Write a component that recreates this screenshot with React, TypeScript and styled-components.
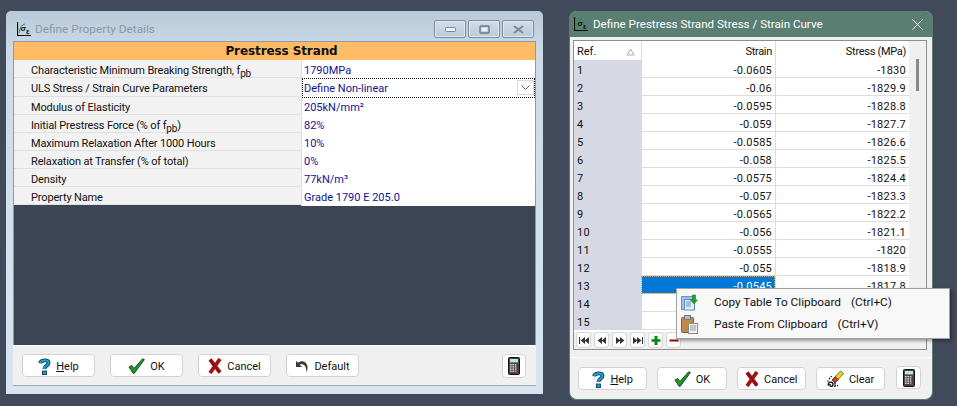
import React from 'react';
import styled, { createGlobalStyle } from 'styled-components';

const Global = createGlobalStyle`
  html, body { margin: 0; padding: 0; background: #3f4858; }
  body { width: 957px; height: 406px; overflow: hidden; font-family: Roboto, "Liberation Sans", sans-serif; font-size: 11px; color: #111; }
  * { box-sizing: border-box; }
`;

const Desktop = styled.div`
  position: relative;
  width: 957px;
  height: 406px;
  background: #414a5a;
`;

const LeftWindow = styled.section`
  position: absolute;
  left: 6px;
  top: 11px;
  width: 537px;
  height: 383px;
  border-radius: 5px 5px 0 0;
  background: linear-gradient(180deg, #b9c9d9 0, #cddbe8 40px, #d8e5f1 100%);
  padding: 0 7px 8px;
  display: flex;
  flex-direction: column;
`;

const LeftTitle = styled.header`
  height: 30px;
  flex: none;
  display: flex;
  align-items: center;
  gap: 4px;
  padding: 6px 2px 0 4px;
  color: #8a99a8;
  font-size: 11.8px;
`;

const TitleText = styled.span`
  flex: 1;
`;

const CtlGroup = styled.div`
  display: flex;
  gap: 2px;
`;

const Ctl = styled.div`
  width: 32px;
  height: 18px;
  border: 1px solid #7e8c9c;
  border-radius: 2px;
  background: linear-gradient(180deg, #d0dce8, #bccbda);
  display: flex;
  align-items: center;
  justify-content: center;
  box-shadow: inset 0 0 0 1px #dfe8f0;
`;

const LeftBody = styled.div`
  flex: 1;
  min-height: 0;
  display: flex;
  flex-direction: column;
  border: 1px solid #8c99a6;
  border-bottom: 0;
  background: #3c4554;
`;

const Banner = styled.div`
  height: 18px;
  flex: none;
  background: #ffbb66;
  padding-left: 14px;
  text-align: center;
  font-family: "DejaVu Sans", sans-serif;
  font-weight: 700;
  font-size: 12px;
  letter-spacing: -0.1px;
  line-height: 18px;
  color: #111;
`;

const PropRow = styled.div<{ $h?: number }>`
  display: grid;
  grid-template-columns: 288px 1fr;
  grid-template-rows: 1fr;
  height: ${p => p.$h ?? 18}px;
  flex: none;
  background: #f2f2f2;
  border-bottom: 1px solid #e0e0e0;
`;

const PropLabel = styled.div`
  padding: 2px 0 0 17px;
  line-height: 17px;
  letter-spacing: -0.15px;
  white-space: nowrap;
  border-right: 1px solid #e0e0e0;
  color: #111;
`;

const PropValue = styled.div`
  background: #fff;
  color: #12128f;
  padding: 2px 0 0 2px;
  line-height: 17px;
  white-space: nowrap;
`;

const Combo = styled(PropValue)`
  position: relative;
  padding: 1px 0 0 1px;
  margin-bottom: -1px;
  border: 1px dotted #111;
`;

const ComboArrow = styled.span`
  position: absolute;
  right: 0;
  top: 1px;
  width: 17px;
  height: 15px;
  background: #fff;
  border: 1px solid #d8d8d8;
  display: flex;
  align-items: center;
  justify-content: center;
`;

const Sub = styled.span`
  font-size: 10px;
  position: relative;
  top: 3px;
`;

const Spacer = styled.div`
  flex: 1;
`;

const LeftFooter = styled.footer`
  height: 41px;
  flex: none;
  background: #f0f0f0;
  border-top: 1px solid #fff;
  border-bottom: 1px solid #a9a9a9;
  margin: 0 -1px;
  padding: 8px 10px 0 9px;
  display: flex;
  gap: 15px;
`;

const Btn = styled.button<{ $w?: number }>`
  width: ${p => p.$w ?? 73}px;
  height: 23px;
  padding: 1px 0 0;
  border: 1px solid #d3d3d3;
  border-radius: 4px;
  background: #fff;
  font: inherit;
  color: #111;
  display: flex;
  align-items: center;
  justify-content: center;
  gap: 5px;
`;

const CalcBtn = styled(Btn)`
  width: 24px;
  height: 24px;
  padding: 0;
  margin-left: auto;
  border-radius: 4px;
`;

const U = styled.span`
  text-decoration: underline;
`;

const RightWindow = styled.section`
  position: absolute;
  left: 569px;
  top: 11px;
  width: 364px;
  height: 389px;
  border-radius: 8px;
  background: #f0f0f0;
  border: 1px solid #5a7f72;
  border-top: 0;
  display: flex;
  flex-direction: column;
`;

const RightTitle = styled.header`
  height: 26px;
  flex: none;
  margin: 0 -1px;
  padding: 0 10px 0 5px;
  background: #5a7f72;
  border-radius: 8px 8px 0 0;
  display: flex;
  align-items: center;
  gap: 5px;
  color: #fff;
  font-size: 11.6px;
`;

const GridFrame = styled.div`
  margin: 3px 5px 0 3px;
  height: 310px;
  border: 1px solid #8f8f8f;
  background: #f0f0f0;
  flex: none;
  display: flex;
  flex-direction: column;
`;

const GridArea = styled.div`
  display: grid;
  grid-template-columns: 335px 1fr;
  height: 291px;
  flex: none;
`;

const Table = styled.div`
  display: flex;
  flex-direction: column;
  background: #fff;
  overflow: hidden;
`;

const TableRow = styled.div`
  display: grid;
  grid-template-columns: 67px 134px 134px;
  grid-template-rows: 18px;
  height: 18px;
  line-height: 21px;
  flex: none;
`;

const HeadRow = styled(TableRow)`
  grid-template-rows: 19px;
  height: 19px;
`;

const RefHead = styled.div`
  padding-left: 3px;
  position: relative;
`;

const SortMark = styled.svg`
  position: absolute;
  right: 6px;
  top: 7px;
`;

const RefCell = styled.div`
  background: #d6d9e3;
  padding-left: 3px;
  letter-spacing: 0.2px;
`;

const Num = styled.div`
  text-align: right;
  padding-right: 3px;
  border-left: 1px solid #dcdcdc;
  letter-spacing: -0.3px;
`;

const DataNum = styled(Num)<{ $sel?: boolean }>`
  border-bottom: 1px solid #dcdcdc;
  letter-spacing: 0.25px;
  ${p => p.$sel && `
    background: #0078d7;
    color: #fff;
    outline: 1px dotted #e8a050;
    outline-offset: -1px;
  `}
`;

const ScrollTrack = styled.div`
  background: #f0f0f0;
  position: relative;
`;

const ScrollThumb = styled.div`
  position: absolute;
  left: 7px;
  top: 18px;
  width: 3px;
  height: 32px;
  background: #8a8a8a;
`;

const NavBar = styled.div`
  display: flex;
  gap: 3px;
  padding: 0 0 0 2px;
  height: 17px;
`;

const NavBtn = styled.button`
  width: 15px;
  height: 16px;
  padding: 0;
  border: 1px solid #d8d8d8;
  border-radius: 3px;
  background: #fbfbfb;
  display: flex;
  align-items: center;
  justify-content: center;
`;

const RightFooter = styled.footer`
  margin-top: 7px;
  border-top: 1px solid #fff;
  padding: 9px 11px 0 8px;
  display: flex;
  gap: 10px;
  align-items: flex-start;
`;

const RightCalc = styled(CalcBtn)`
  width: 25px;
  height: 23px;
  margin-top: -1px;
  margin-left: 1px;
`;

const Menu = styled.div`
  position: absolute;
  left: 676px;
  top: 288px;
  width: 274px;
  height: 51px;
  background: #f8f8f8;
  border: 1px solid #a0a0a0;
  box-shadow: 2px 2px 3px rgba(0, 0, 0, 0.35);
  padding: 2px 0;
  font-size: 11.8px;
  z-index: 5;
`;

const MenuItem = styled.div`
  height: 22px;
  display: flex;
  align-items: center;
  padding-left: 4px;
`;

const MenuIcon = styled.span`
  width: 33px;
  flex: none;
  display: flex;
`;

const Shortcut = styled.span`
  margin-left: 10px;
`;

const LogoWrap = styled.svg`
  flex: none;
`;

const Logo = () => (
  <LogoWrap width="14" height="14" viewBox="0 0 14 14">
    <path d="M0.5 0V13.5H14" stroke="#0b0b0b" strokeWidth="1.2" fill="none" />
    <path d="M2 11Q3 3 8 2" stroke="#1c9a2c" strokeWidth="1" fill="none" />
    <text x="3.6" y="8.5" fontSize="8" fontWeight="700" fontFamily="Liberation Sans" fill="#111">σ</text>
    <text x="9" y="12" fontSize="7.5" fontWeight="700" fontFamily="Liberation Sans" fill="#111">ε</text>
  </LogoWrap>
);

const HelpIcon = () => (
  <svg width="13" height="17" viewBox="0 0 13 17">
    <path d="M2.2 5.2C2.6 1.8 10.4 1 10.6 4.8C10.8 7.4 6.4 7.6 6.4 11" stroke="#0a2a58" strokeWidth="3.8" fill="none" />
    <path d="M2.2 5.2C2.6 1.8 10.4 1 10.6 4.8C10.8 7.4 6.4 7.6 6.4 11" stroke="#16a6c9" strokeWidth="2.2" fill="none" />
    <rect x="4.4" y="13" width="4" height="3.6" fill="#0fa0c0" stroke="#0a2a58" strokeWidth="0.8" />
  </svg>
);

const OkIcon = () => (
  <svg width="17" height="16" viewBox="0 0 17 16">
    <path d="M1 9L3.6 7.4L6 10.4L14.6 0.8L16.4 1.6L6.2 15.4H5.2Z" fill="#1f9a1f" stroke="#0e3d2c" strokeWidth="0.9" strokeLinejoin="round" />
  </svg>
);

const CancelIcon = () => (
  <svg width="14" height="16" viewBox="0 0 14 16">
    <path d="M2 1.5L12 14.5M12 1L2 15" stroke="#a01414" strokeWidth="3.8" />
    <path d="M2 1.5L12 14.5" stroke="#7a0a0a" strokeWidth="1" />
  </svg>
);

const DefaultIcon = () => (
  <svg width="14" height="13" viewBox="0 0 14 13">
    <path d="M1 1L1 7L7 7L4.6 4.6C7.4 3.4 10.4 4.6 11 8.4L11.4 12C13.8 7.6 12.4 2.4 8.4 1.4C6.6 1 4.8 1.4 3.2 2.8Z" fill="#3a3a3a" />
  </svg>
);

const CalcIcon = () => (
  <svg width="12" height="18" viewBox="0 0 12 18">
    <rect x="0.5" y="0.5" width="11" height="17" rx="1" fill="#454545" stroke="#111" />
    <rect x="2" y="2" width="8" height="3.4" fill="#bfe6e6" />
    {[7, 9.2, 11.4, 13.6].map(y => [2, 4.4, 6.8].map(x => (
      <rect key={`${x}-${y}`} x={x} y={y} width="1.6" height="1.4" fill="#d8d8d8" />
    )))}
    <rect x="6.8" y="14.6" width="3" height="1.2" fill="#e02020" />
  </svg>
);

const ClearIcon = () => (
  <svg width="17" height="18" viewBox="0 0 17 18">
    <path d="M5 10L13.6 1L16.4 3.6L8 13Z" fill="#f3d21a" stroke="#333" strokeWidth="0.7" />
    <path d="M5 10L8.4 6.6L11.4 9.6L8 13Z" fill="#e83030" stroke="#333" strokeWidth="0.7" />
    <path d="M1.4 15.6C0.6 11.6 5.4 11 6 14C6.2 17 2.6 17.4 3 14M7 16.4L9 15.6M10 16L11 15.4M2 8L3 9M0.4 11L1.4 11M4 6L4.6 7M7.4 13.4L8.6 14.4" stroke="#111" strokeWidth="1.4" fill="none" />
  </svg>
);

const Chevron = () => (
  <svg width="9" height="5" viewBox="0 0 9 5"><path d="M0.5 0.5L4.5 4.5L8.5 0.5" stroke="#666" fill="none" /></svg>
);

const CopyIcon = () => (
  <svg width="17" height="17" viewBox="0 0 17 17">
    <rect x="0.5" y="2.5" width="12" height="13" fill="#9cc0e8" stroke="#6a94c8" />
    <rect x="3.5" y="5.5" width="10" height="10.5" fill="#e4eefa" stroke="#5f8cc4" />
    <path d="M5 8H10M5 10H10M5 12H10" stroke="#5f8cc4" />
    <path d="M11.5 1H14.5V6H16.5L13 10L9.5 6H11.5Z" fill="#22a022" stroke="#14701a" strokeWidth="0.5" />
  </svg>
);

const PasteIcon = () => (
  <svg width="17" height="19" viewBox="0 0 17 19">
    <rect x="0.5" y="2.5" width="12" height="15" rx="1" fill="#c08a4a" stroke="#8a5c28" />
    <rect x="3.5" y="0.5" width="6" height="4" fill="#b8bcc0" stroke="#777" />
    <rect x="7.5" y="8.5" width="9" height="10" fill="#f2f2f2" stroke="#8a8a8a" />
    <path d="M9 11H15M9 13H15M9 15H15" stroke="#999" />
  </svg>
);

const Nav = ({ kind }: { kind: string }) => {
  const c = '#333';
  const map: Record<string, React.ReactNode> = {
    first: <path d="M1 1V8H2V1ZM7 1V8L2.6 4.5ZM11 1V8L6.6 4.5Z" fill={c} />,
    prev: <path d="M6 1V8L1.6 4.5ZM10 1V8L5.6 4.5Z" fill={c} />,
    next: <path d="M2 1V8L6.4 4.5ZM6 1V8L10.4 4.5Z" fill={c} />,
    last: <path d="M1 1V8L5.4 4.5ZM5 1V8L9.4 4.5ZM10 1V8H11V1Z" fill={c} />,
    add: <path d="M4.5 0H7.5V3.2H10.5V5.8H7.5V9H4.5V5.8H1.5V3.2H4.5Z" fill="#0a8a0a" />,
    del: <path d="M1.5 3.5H10.5V5.5H1.5Z" fill="#8a1010" />,
  };
  return <svg width="12" height="9" viewBox="0 0 12 9">{map[kind]}</svg>;
};

const props: [React.ReactNode, React.ReactNode, number?][] = [
  [<>Characteristic Minimum Breaking Strength, f<Sub>pb</Sub></>, '1790MPa', 18],
  ['ULS Stress / Strain Curve Parameters', null, 19],
  ['Modulus of Elasticity', '205kN/mm²', 18],
  [<>Initial Prestress Force (% of f<Sub>pb</Sub>)</>, '82%', 18],
  ['Maximum Relaxation After 1000 Hours', '10%', 18],
  ['Relaxation at Transfer (% of total)', '0%', 18],
  ['Density', '77kN/m³', 18],
  ['Property Name', 'Grade 1790 E 205.0', 18],
];

const rows: [string, string][] = [
  ['-0.0605', '-1830'], ['-0.06', '-1829.9'], ['-0.0595', '-1828.8'], ['-0.059', '-1827.7'],
  ['-0.0585', '-1826.6'], ['-0.058', '-1825.5'], ['-0.0575', '-1824.4'], ['-0.057', '-1823.3'],
  ['-0.0565', '-1822.2'], ['-0.056', '-1821.1'], ['-0.0555', '-1820'], ['-0.055', '-1818.9'],
  ['-0.0545', '-1817.8'], ['', ''], ['', ''],
];

export default function App() {
  return (
    <Desktop>
      <Global />
      <LeftWindow>
        <LeftTitle>
          <Logo />
          <TitleText>Define Property Details</TitleText>
          <CtlGroup>
            <Ctl><svg width="11" height="5"><rect x="0.5" y="0.5" width="10" height="4" rx="1" fill="#eef3f7" stroke="#7a8794" /></svg></Ctl>
            <Ctl><svg width="11" height="9"><rect x="1" y="1" width="9" height="7" rx="1" fill="none" stroke="#6b7885" strokeWidth="1.4" /><rect x="3" y="3" width="5" height="3" fill="#eef3f7" /></svg></Ctl>
            <Ctl><svg width="11" height="9"><path d="M1 1L10 8M10 1L1 8" stroke="#7a8794" strokeWidth="2" /></svg></Ctl>
          </CtlGroup>
        </LeftTitle>
        <LeftBody>
          <Banner>Prestress Strand</Banner>
          {props.map(([label, value, h], i) => (
            <PropRow key={i} $h={h}>
              <PropLabel>{label}</PropLabel>
              {value === null
                ? <Combo>Define Non-linear<ComboArrow><Chevron /></ComboArrow></Combo>
                : <PropValue>{value}</PropValue>}
            </PropRow>
          ))}
          <Spacer />
          <LeftFooter>
            <Btn><HelpIcon /><span><U>H</U>elp</span></Btn>
            <Btn><OkIcon />OK</Btn>
            <Btn><CancelIcon />Cancel</Btn>
            <Btn><DefaultIcon />Default</Btn>
            <CalcBtn><CalcIcon /></CalcBtn>
          </LeftFooter>
        </LeftBody>
      </LeftWindow>

      <RightWindow>
        <RightTitle>
          <Logo />
          <TitleText>Define Prestress Strand Stress / Strain Curve</TitleText>
          <svg width="11" height="11" viewBox="0 0 11 11"><path d="M0.5 0.5L10.5 10.5M10.5 0.5L0.5 10.5" stroke="#fff" /></svg>
        </RightTitle>
        <GridFrame>
          <GridArea>
            <Table>
              <HeadRow>
                <RefHead>Ref.
                  <SortMark width="9" height="8" viewBox="0 0 9 8"><path d="M4.5 1L8 7H1Z" fill="none" stroke="#aaa" /></SortMark>
                </RefHead>
                <Num>Strain</Num>
                <Num>Stress (MPa)</Num>
              </HeadRow>
              {rows.map(([a, b], i) => (
                <TableRow key={i}>
                  <RefCell>{i + 1}</RefCell>
                  <DataNum $sel={i === 12}>{a}</DataNum>
                  <DataNum>{b}</DataNum>
                </TableRow>
              ))}
            </Table>
            <ScrollTrack><ScrollThumb /></ScrollTrack>
          </GridArea>
          <NavBar>
            {['first', 'prev', 'next', 'last', 'add', 'del'].map(k => (
              <NavBtn key={k}><Nav kind={k} /></NavBtn>
            ))}
          </NavBar>
        </GridFrame>
        <RightFooter>
          <Btn $w={70}><HelpIcon /><span><U>H</U>elp</span></Btn>
          <Btn $w={70}><OkIcon />OK</Btn>
          <Btn $w={70}><CancelIcon />Cancel</Btn>
          <Btn $w={70}><ClearIcon />Clear</Btn>
          <RightCalc><CalcIcon /></RightCalc>
        </RightFooter>
      </RightWindow>

      <Menu>
        <MenuItem><MenuIcon><CopyIcon /></MenuIcon>Copy Table To Clipboard<Shortcut>(Ctrl+C)</Shortcut></MenuItem>
        <MenuItem><MenuIcon><PasteIcon /></MenuIcon>Paste From Clipboard<Shortcut>(Ctrl+V)</Shortcut></MenuItem>
      </Menu>
    </Desktop>
  );
}
